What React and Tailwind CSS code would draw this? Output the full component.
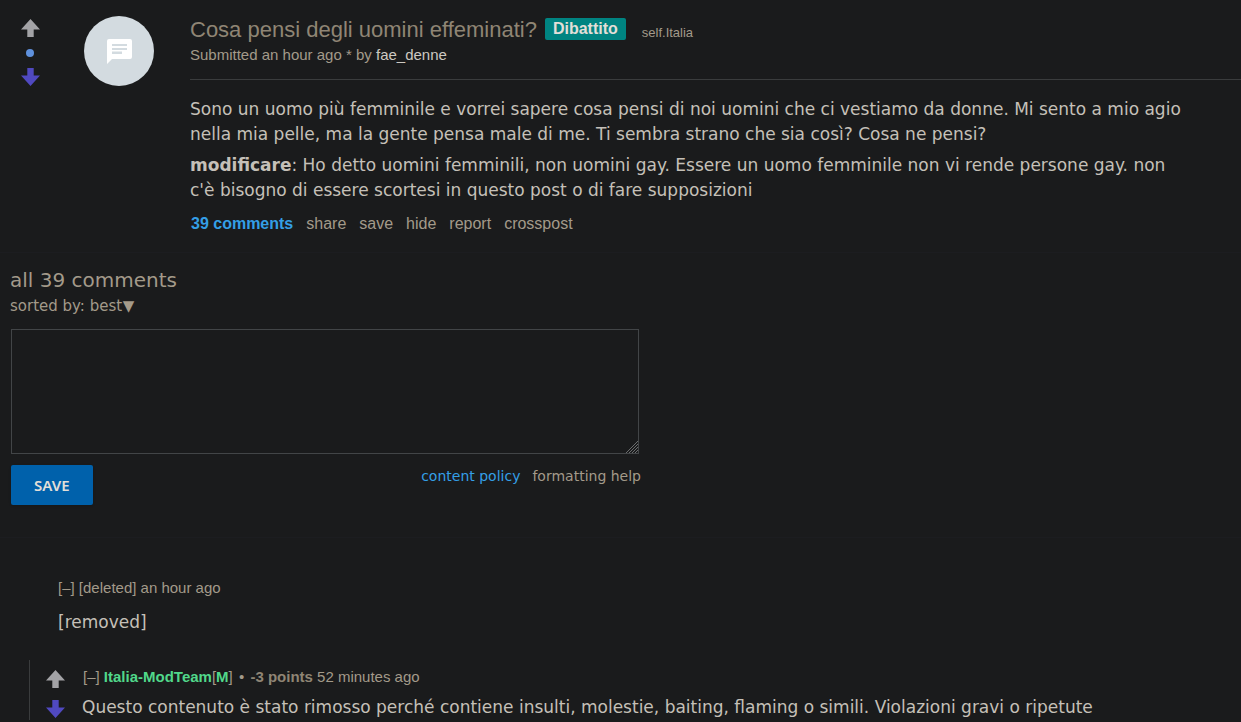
import React from "react";

const sans = "font-['Liberation_Sans',Arial,sans-serif]";
const body = "font-['DejaVu_Sans',Verdana,sans-serif]";

function ArrowIcon({ down, className }) {
  return (
    <svg viewBox="0 0 21 18" className={`h-[18px] w-[21px] ${down ? "rotate-180" : ""} ${className}`} aria-hidden="true">
      <path d="M10.5 0 L20 10.4 H13.7 V18 H7.3 V10.4 H1 Z" fill="currentColor" />
    </svg>
  );
}

function VoteButton({ down, label }) {
  return (
    <button type="button" aria-label={label} className="block">
      <ArrowIcon down={down} className={down ? "text-[#5049c0]" : "text-[#a3a3a6]"} />
    </button>
  );
}

function Thumbnail() {
  return (
    <div className="flex size-[70px] shrink-0 items-center justify-center rounded-full bg-[#d3dbe0]">
      <svg viewBox="0 0 25 25" className="size-[25px]" aria-hidden="true">
        <path d="M2 0 H23 Q25 0 25 2 V18 Q25 20 23 20 H5 L0 25 V2 Q0 0 2 0 Z" fill="#fff" />
        <path d="M5 5 H20 V7 H5 Z M5 9 H20 V11 H5 Z M5 12.5 H15 V15 H5 Z" fill="#d3dbe0" />
      </svg>
    </div>
  );
}

const actions = ["share", "save", "hide", "report", "crosspost"];

function Post() {
  return (
    <article className="flex border-b border-[#1c1d20] pt-4 pb-4">
      <div className="flex w-[84px] shrink-0 flex-col items-start pt-[3px] pl-5">
        <VoteButton label="Upvote" />
        <span className="mt-3 mb-[11px] ml-1.5 size-2 rounded-full bg-[#5f91dc]" />
        <VoteButton down label="Downvote" />
      </div>
      <Thumbnail />
      <div className="ml-9 min-w-0 grow">
        <header className={`border-b border-[#3a3c3d] pb-[13px] ${sans}`}>
          <div className="flex items-start">
            <h1 className="text-[22px] leading-7">
              <a href="#post" className="text-[#8f8574]">Cosa pensi degli uomini effeminati?</a>
            </h1>
            <span className="mt-0.5 ml-2 rounded-xs bg-[#008481] px-2 text-base leading-[22px] font-bold text-[#e3dfd8]">Dibattito</span>
            <a href="#italia" className="ml-4 pt-2 text-[13px] leading-[18px] text-[#a39a8a]">self.Italia</a>
          </div>
          <p className="text-[15px] leading-[22px] text-[#a39a8a]">
            Submitted an hour ago * by <a href="#author" className="text-[#cdc9c1]">fae_denne</a>
          </p>
        </header>
        <div className={`mt-[17px] flex flex-col gap-1.5 pr-12 text-[17px] leading-[25px] text-[#c5c0b8] ${body}`}>
          <p>
            Sono un uomo più femminile e vorrei sapere cosa pensi di noi uomini che ci vestiamo da donne. Mi sento a mio
            agio nella mia pelle, ma la gente pensa male di me. Ti sembra strano che sia così? Cosa ne pensi?
          </p>
          <p>
            <strong>modificare</strong>: Ho detto uomini femminili, non uomini gay. Essere un uomo femminile non vi
            rende persone gay. non c'è bisogno di essere scortesi in questo post o di fare supposizioni
          </p>
        </div>
        <nav className={`mt-[9px] flex gap-[13px] pl-px text-base leading-6 text-[#a39a8a] ${sans}`}>
          <a href="#comments" className="font-bold text-[#349fe6]">39 comments</a>
          {actions.map((a) => (
            <a key={a} href={`#${a}`}>{a}</a>
          ))}
        </nav>
      </div>
    </article>
  );
}

function ResizeGrip() {
  return (
    <svg viewBox="0 0 12 12" className="pointer-events-none absolute right-px bottom-px size-3" aria-hidden="true">
      <path d="M0 12 L12 0 M3 12 L12 3 M6 12 L12 6 M9 12 L12 9" stroke="#6b6d6e" strokeWidth="1" />
    </svg>
  );
}

function ReplyForm() {
  return (
    <section id="comments" className={`border-b border-[#1c1d20] px-2.5 pt-[13px] pb-8 text-[#a39a8a] ${body}`}>
      <h2 className="text-xl leading-7">all 39 comments</h2>
      <div className="flex items-center text-[15px] leading-6">
        <label htmlFor="sort">sorted by:&nbsp;</label>
        <select id="sort" defaultValue="best" className="appearance-none bg-transparent">
          <option value="best">best</option>
        </select>
        <span aria-hidden="true">▼</span>
      </div>
      <form className="mt-[11px] max-w-[631px] pl-px" onSubmit={(e) => e.preventDefault()}>
        <div className="relative w-fit max-w-full">
          <textarea
            aria-label="Comment"
            className="block h-[125px] w-[628px] max-w-full resize border border-[#424547] bg-transparent p-2 text-base text-[#c5c0b8] [&::-webkit-resizer]:bg-transparent"
          />
          <ResizeGrip />
        </div>
        <div className="mt-[11px] flex items-start justify-between">
          <button
            type="submit"
            className="h-10 rounded-xs bg-[#0061ab] px-[23px] font-['Noto_Sans',sans-serif] text-[15px] font-semibold text-[#e3dfd8] shadow-sm"
          >
            SAVE
          </button>
          <div className="flex gap-3 text-sm leading-[22px]">
            <a href="#policy" className="text-[#349fe6]">content policy</a>
            <a href="#help">formatting help</a>
          </div>
        </div>
      </form>
    </section>
  );
}

function Comments() {
  return (
    <section className="pt-10 pl-[29px]">
      <article className="pl-[29px]">
        <p className={`text-[15px] leading-5 text-[#a39a8a] ${sans}`}>
          <button type="button" aria-label="Collapse comment">[–]</button> [deleted] an hour ago
        </p>
        <p className={`mt-3 text-[17px] leading-[25px] text-[#c5c0b8] ${body}`}>[removed]</p>
      </article>
      <article className="mt-[25px] flex border-l border-[#3a3c3d]">
        <div className="flex w-[52px] shrink-0 flex-col items-start gap-3 pt-2.5 pl-[15px]">
          <VoteButton label="Upvote" />
          <VoteButton down label="Downvote" />
        </div>
        <div className="min-w-0 pt-[7px] pr-4">
          <p className={`pl-px text-[15px] leading-5 text-[#a39a8a] ${sans}`}>
            <button type="button" aria-label="Collapse comment">[–]</button>{" "}
            <a href="#mod" className="font-bold text-[#51d88a]">Italia-ModTeam</a>[
            <b className="text-[#51d88a]">M</b>] <span className="mx-0.5">•</span>{" "}
            <b className="text-[#8f8574]">-3 points</b> 52 minutes ago
          </p>
          <p className={`mt-2 text-[17px] leading-[25px] text-[#c5c0b8] ${body}`}>
            Questo contenuto è stato rimosso perché contiene insulti, molestie, baiting, flaming o simili. Violazioni gravi o ripetute
          </p>
        </div>
      </article>
    </section>
  );
}

export default function App() {
  return (
    <main className="h-screen overflow-hidden bg-[#1a1b1c]">
      <Post />
      <ReplyForm />
      <Comments />
    </main>
  );
}
